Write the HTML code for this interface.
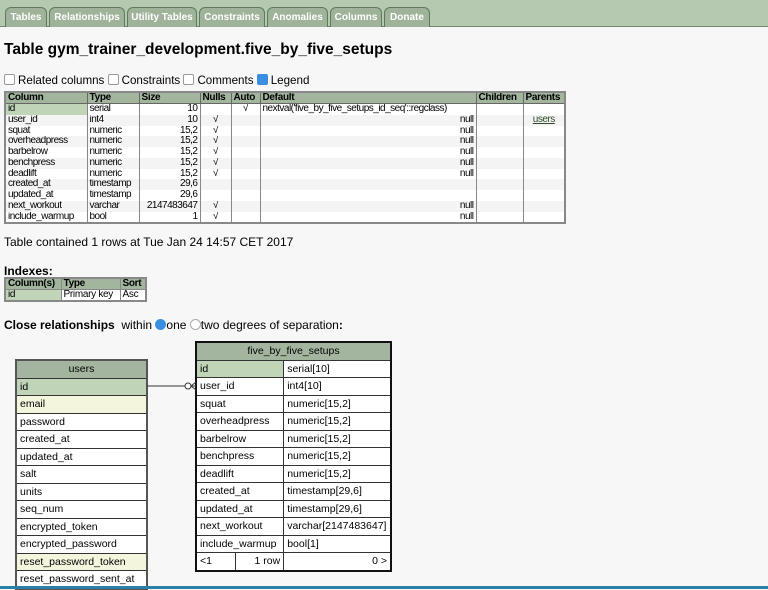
<!DOCTYPE html>
<html><head><style>
body{margin:0;width:768px;height:589px;overflow:hidden;background:#f7f7f7;font-family:"Liberation Sans",Arial,sans-serif;color:#000;position:relative}
.bar{position:absolute;left:0;top:0;width:768px;height:26px;background:#b5c9b0;border-bottom:1px solid #6f8a6a}
.tab{position:absolute;top:7px;height:19px;background:#9eb39a;border:1px solid #5f7a5b;border-bottom:none;border-radius:6px 6px 0 0;color:#fff;font-weight:bold;font-size:10px;line-height:19px;text-align:center}
h1{position:absolute;left:4px;top:41px;margin:0;font-size:15.5px;font-weight:bold}
.cb{position:absolute;top:74px;left:4px;font-size:11.6px}
.cb span{display:inline-block;width:9px;height:9px;border:1px solid #999;border-radius:2px;background:#fff;margin-right:3px;vertical-align:-1px}
table{border-collapse:collapse}
.main{position:absolute;left:4px;top:91px;font-size:10px;letter-spacing:-0.5px;border:2px solid #888;table-layout:fixed;width:562px}
.main td{border-left:1px solid #888;padding:0 2px;height:10.75px;line-height:10.75px;white-space:nowrap;overflow:hidden}
.main tr.h td{background:#a2b69e;font-weight:bold;border:1px solid #666;letter-spacing:-0.3px;height:10px;line-height:10px}
.main tr:nth-child(odd):not(.h) td{background:#f4f4f4}
.main tr:nth-child(even) td{background:#fff}
.r{text-align:right}.c{text-align:center}
.t{position:absolute;left:4px;font-size:12px}
.idx{position:absolute;left:4px;top:277px;font-size:10px;letter-spacing:-0.3px;border:2px solid #888;table-layout:fixed;width:143px}
.idx td{border:1px solid #888;padding:0 2px;line-height:10px;height:10px;background:#fff;white-space:nowrap;overflow:hidden}
.idx tr.h td{background:#a2b69e;font-weight:bold}
.erd{position:absolute;font-size:10.5px;border-collapse:collapse;background:#fff}
.erd td{border:1px solid #333;height:16.5px;padding:0 3px;white-space:nowrap}
.erd .hd td{background:#a3b59f;text-align:center}
</style></head><body>
<div class="bar"></div>
<div class="tab" style="left:5px;width:40px">Tables</div>
<div class="tab" style="left:49px;width:74px">Relationships</div>
<div class="tab" style="left:127px;width:68px">Utility Tables</div>
<div class="tab" style="left:199px;width:64px">Constraints</div>
<div class="tab" style="left:267px;width:59px">Anomalies</div>
<div class="tab" style="left:330px;width:50px">Columns</div>
<div class="tab" style="left:384px;width:44px">Donate</div>
<h1>Table gym_trainer_development.five_by_five_setups</h1>
<div class="cb"><span></span>Related columns <span></span>Constraints <span></span>Comments <span style="background:#3b8fe0;border-color:#3b8fe0"></span>Legend</div>
<table class="main">
<colgroup><col style="width:82px"><col style="width:52px"><col style="width:61px"><col style="width:31px"><col style="width:29px"><col style="width:216px"><col style="width:47px"><col></colgroup>
<tr class="h"><td>Column</td><td>Type</td><td>Size</td><td>Nulls</td><td>Auto</td><td>Default</td><td>Children</td><td>Parents</td></tr>
<tr><td style="background:#c0d4b8">id</td><td>serial</td><td class="r">10</td><td></td><td class="c">√</td><td>nextval('five_by_five_setups_id_seq'::regclass)</td><td></td><td></td></tr>
<tr><td>user_id</td><td>int4</td><td class="r">10</td><td class="c">√</td><td></td><td class="r">null</td><td></td><td class="c"><u style="color:#2d4a2b">users</u></td></tr>
<tr><td>squat</td><td>numeric</td><td class="r">15,2</td><td class="c">√</td><td></td><td class="r">null</td><td></td><td></td></tr>
<tr><td>overheadpress</td><td>numeric</td><td class="r">15,2</td><td class="c">√</td><td></td><td class="r">null</td><td></td><td></td></tr>
<tr><td>barbelrow</td><td>numeric</td><td class="r">15,2</td><td class="c">√</td><td></td><td class="r">null</td><td></td><td></td></tr>
<tr><td>benchpress</td><td>numeric</td><td class="r">15,2</td><td class="c">√</td><td></td><td class="r">null</td><td></td><td></td></tr>
<tr><td>deadlift</td><td>numeric</td><td class="r">15,2</td><td class="c">√</td><td></td><td class="r">null</td><td></td><td></td></tr>
<tr><td>created_at</td><td>timestamp</td><td class="r">29,6</td><td></td><td></td><td></td><td></td><td></td></tr>
<tr><td>updated_at</td><td>timestamp</td><td class="r">29,6</td><td></td><td></td><td></td><td></td><td></td></tr>
<tr><td>next_workout</td><td>varchar</td><td class="r">2147483647</td><td class="c">√</td><td></td><td class="r">null</td><td></td><td></td></tr>
<tr><td>include_warmup</td><td>bool</td><td class="r">1</td><td class="c">√</td><td></td><td class="r">null</td><td></td><td></td></tr>
</table>
<div class="t" style="top:235px">Table contained 1 rows at Tue Jan 24 14:57 CET 2017</div>
<div class="t" style="top:264px;font-weight:bold">Indexes:</div>
<table class="idx"><colgroup><col style="width:56px"><col style="width:59px"><col></colgroup><tr class="h"><td>Column(s)</td><td>Type</td><td>Sort</td></tr>
<tr><td style="background:#c0d4b8">id</td><td>Primary key</td><td>Asc</td></tr></table>
<div class="t" style="top:318px"><b>Close relationships</b>&nbsp; within <span style="display:inline-block;width:9px;height:9px;border-radius:50%;background:#3b8fe0;border:1px solid #3b8fe0;vertical-align:-1px"></span>one <span style="display:inline-block;width:9px;height:9px;border-radius:50%;background:#fff;border:1px solid #aaa;vertical-align:-1px"></span>two degrees of separation<b>:</b></div>
<table class="erd" style="left:15px;top:359px;width:133px;border:2px solid #555">
<tr class="hd"><td>users</td></tr>
<tr><td style="background:#c0d4b8">id</td></tr>
<tr><td style="background:#f3f6dc">email</td></tr>
<tr><td>password</td></tr><tr><td>created_at</td></tr><tr><td>updated_at</td></tr><tr><td>salt</td></tr><tr><td>units</td></tr><tr><td>seq_num</td></tr><tr><td>encrypted_token</td></tr><tr><td>encrypted_password</td></tr>
<tr><td style="background:#f3f6dc">reset_password_token</td></tr>
<tr><td>reset_password_sent_at</td></tr>
</table>
<table class="erd" style="left:195px;top:341px;width:197px;border:2px solid #111">
<tr class="hd"><td colspan="3">five_by_five_setups</td></tr>
<tr><td colspan="2" style="background:#c0d4b8;width:80px">id</td><td>serial[10]</td></tr>
<tr><td colspan="2">user_id</td><td>int4[10]</td></tr>
<tr><td colspan="2">squat</td><td>numeric[15,2]</td></tr>
<tr><td colspan="2">overheadpress</td><td>numeric[15,2]</td></tr>
<tr><td colspan="2">barbelrow</td><td>numeric[15,2]</td></tr>
<tr><td colspan="2">benchpress</td><td>numeric[15,2]</td></tr>
<tr><td colspan="2">deadlift</td><td>numeric[15,2]</td></tr>
<tr><td colspan="2">created_at</td><td>timestamp[29,6]</td></tr>
<tr><td colspan="2">updated_at</td><td>timestamp[29,6]</td></tr>
<tr><td colspan="2">next_workout</td><td>varchar[2147483647]</td></tr>
<tr><td colspan="2">include_warmup</td><td>bool[1]</td></tr>
<tr><td style="width:32px">&lt;1</td><td style="text-align:right">1 row</td><td style="text-align:right">0 &gt;</td></tr>
</table>
<svg style="position:absolute;left:147px;top:380px" width="50" height="12"><line x1="0" y1="6" x2="44" y2="6" stroke="#333"/><circle cx="41" cy="6" r="3" fill="#fff" stroke="#333"/><path d="M44 6L49 2M44 6L49 10M44 6H49" stroke="#333"/></svg>
<div style="position:absolute;left:0;top:586px;width:768px;height:3px;background:#2d7fa5"></div>
</body></html>
